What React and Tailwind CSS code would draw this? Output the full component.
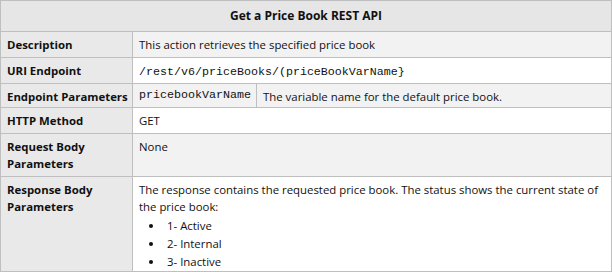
import React from "react";

const sans = { fontFamily: '"Open Sans", "Noto Sans", sans-serif' };
const mono = { fontFamily: '"Liberation Mono", "Courier New", monospace' };

function Row({ label, h, bg, children, last }) {
  return (
    <div className={`flex ${h} ${last ? "" : "border-b border-[#bfbfbf]"}`}>
      <div className="w-[132px] shrink-0 whitespace-nowrap border-r border-[#bfbfbf] bg-[#e9e9e9] px-[6px] pt-[4px] font-bold leading-[17px]">
        {label}
      </div>
      <div className={`flex-1 ${bg} px-[6px] pt-[4px] leading-[17px]`}>{children}</div>
    </div>
  );
}

export default function App() {
  return (
    <div className="w-[612px] h-[272px] bg-white" style={sans}>
      <div className="flex h-full flex-col border border-[#bfbfbf] text-[11.4px] text-[#111]">
        <div className="flex h-[31px] items-center justify-center border-b border-[#bfbfbf] bg-[#e6e6e6] text-[12px] font-bold">
          Get a Price Book REST API
        </div>
        <Row label="Description" h="h-[26px]" bg="bg-[#f2f2f2]">
          This action retrieves the specified price book
        </Row>
        <Row label="URI Endpoint" h="h-[26px]" bg="bg-white">
          <span className="text-[11.67px]" style={mono}>
            /rest/v6/priceBooks/(priceBookVarName}
          </span>
        </Row>
        <Row label="Endpoint Parameters" h="h-[25px]" bg="bg-[#f2f2f2] !p-0 flex">
          <div
            className="w-[124px] shrink-0 border-r border-[#bfbfbf] px-[6px] pt-[3px] text-[11.67px] leading-[17px]"
            style={mono}
          >
            pricebookVarName
          </div>
          <div className="flex-1 px-[6px] pt-[4px] leading-[17px]">
            The variable name for the default price book.
          </div>
        </Row>
        <Row label="HTTP Method" h="h-[26px]" bg="bg-white">
          GET
        </Row>
        <Row label={<>Request Body<br />Parameters</>} h="h-[43px]" bg="bg-[#f2f2f2]">
          None
        </Row>
        <Row label={<>Response Body<br />Parameters</>} h="flex-1" bg="bg-white" last>
          <p>
            The response contains the requested price book. The status shows the current state of the price book:
          </p>
          <ul className="mt-[2px] list-disc pl-[25px] leading-[18px]">
            <li className="pl-[3px]">1- Active</li>
            <li className="pl-[3px]">2- Internal</li>
            <li className="pl-[3px]">3- Inactive</li>
          </ul>
        </Row>
      </div>
    </div>
  );
}
